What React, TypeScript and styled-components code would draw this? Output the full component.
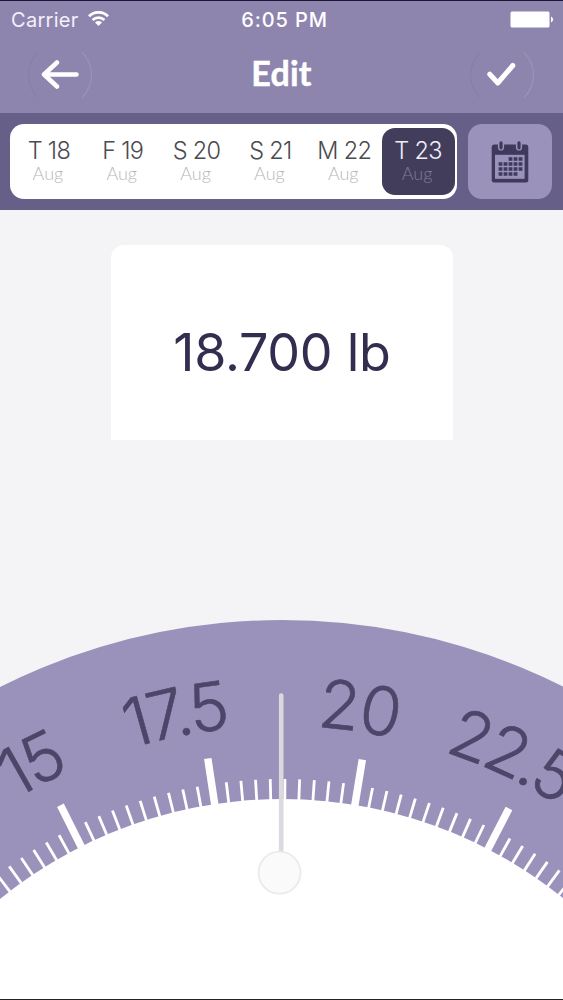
import React from 'react';
import styled, { createGlobalStyle } from 'styled-components';

const GlobalStyle = createGlobalStyle`
  * { box-sizing: border-box; }
  body { margin: 0; background: #f4f4f6; }
`;

const Screen = styled.div`
  width: 563px;
  height: 1000px;
  display: flex;
  flex-direction: column;
  overflow: hidden;
  background: #f4f4f6;
  border-top: 1px solid #1d1538;
  border-bottom: 1px solid #222;
  font-family: Inter, 'Liberation Sans', sans-serif;
`;

const Header = styled.header`
  flex: none;
  height: 112px;
  background: #8e85ae;
  color: #fff;
`;

const StatusBar = styled.div`
  height: 37px;
  padding: 0 9px 0 11px;
  display: grid;
  grid-template-columns: 1fr auto 1fr;
  align-items: center;
  font-size: 20px;
`;

const Carrier = styled.div`
  display: flex;
  align-items: center;
  gap: 9px;
  color: #f3f0fa;
  letter-spacing: 0.3px;
`;

const Clock = styled.div`
  font-weight: 500;
  letter-spacing: 0.9px;
  padding-left: 4px;
`;

const BatteryIcon = styled.svg`
  justify-self: end;
`;

const NavBar = styled.div`
  height: 73px;
  padding: 0 29px 0 28px;
  display: flex;
  align-items: center;
  justify-content: space-between;
`;

const Title = styled.h1`
  margin: 0;
  font-family: Lato, sans-serif;
  font-size: 34px;
  font-weight: 700;
  line-height: 40px;
  letter-spacing: 0.2px;
  padding: 0 0 4px 1px;
  -webkit-text-stroke: 0.5px #fff;
`;

const RoundButton = styled.button`
  width: 64px;
  height: 64px;
  padding: 0;
  border: 1px solid #877ea7;
  border-right-color: #9d95bb;
  border-top-color: transparent;
  border-bottom-color: transparent;
  border-radius: 50%;
  background: none;
  display: flex;
  align-items: center;
  justify-content: center;
`;

const DateBar = styled.div`
  flex: none;
  height: 97px;
  padding: 11px 11px 11px 10px;
  display: flex;
  gap: 11px;
  background: #665f88;
`;

const DayStrip = styled.div`
  width: 447px;
  height: 75px;
  padding: 4px 1.5px 4px 2.5px;
  display: flex;
  border-radius: 14px;
  background: #fff;
`;

const Day = styled.div<{ $active?: boolean }>`
  flex: 1;
  height: 67px;
  padding-top: 9px;
  display: flex;
  flex-direction: column;
  align-items: center;
  border-radius: 13px;
  background: ${(p) => (p.$active ? '#433d5c' : 'transparent')};
  color: ${(p) => (p.$active ? '#f1eff6' : '#4b4a50')};
`;

const DayName = styled.span`
  padding-right: 1px;
  font-size: 23.5px;
  font-weight: 300;
  line-height: 28px;
  letter-spacing: -0.7px;
  white-space: nowrap;
`;

const Month = styled.span<{ $active?: boolean }>`
  margin-top: -3px;
  padding-right: 3px;
  font-family: Lato, sans-serif;
  font-size: 18px;
  font-weight: 300;
  line-height: 22px;
  color: ${(p) => (p.$active ? '#817b98' : '#b7b6bb')};
`;

const CalendarButton = styled.button`
  width: 84px;
  height: 75px;
  padding: 1px 0 0;
  border: 0;
  border-radius: 14px;
  background: #9a92bb;
  display: flex;
  align-items: center;
  justify-content: center;
`;

const Main = styled.main`
  flex: 1;
  display: flex;
  flex-direction: column;
  align-items: center;
  padding-top: 35px;
`;

const ValueCard = styled.section`
  flex: none;
  width: 342px;
  height: 195px;
  margin-left: 1px;
  padding-top: 20px;
  display: flex;
  align-items: center;
  justify-content: center;
  border-radius: 13px 13px 0 0;
  background: #fff;
  color: #332d50;
  font-size: 52px;
  letter-spacing: -0.25px;
`;

const Dial = styled.svg`
  flex: none;
  display: block;
`;

const days = ['T 18', 'F 19', 'S 20', 'S 21', 'M 22', 'T 23'];

const CX = 282;
const CY = 1247;
const OUTER = 627;
const INNER = 448;
const LABEL_R = 521;
const STEP = 1.8;
const ZERO = 0.36;

const ticks = Array.from({ length: 53 }, (_, i) => i - 26);

const labels = [
  { text: '15', angle: -27.5, spacing: -3 },
  { text: '17.5', angle: -11.4, spacing: -3.3 },
  { text: '20', angle: 8.2, spacing: -1.5 },
  { text: '22.5', angle: 25, spacing: -3.8 },
];

function Gauge() {
  return (
    <Dial width="563" height="559" viewBox="0 440 563 559">
      <defs>
        <path id="label-arc" d={`M${CX - LABEL_R} ${CY}A${LABEL_R} ${LABEL_R} 0 0 1 ${CX + LABEL_R} ${CY}`} />
      </defs>
      <circle cx={CX} cy={CY} r={OUTER} fill="#9a92bb" />
      <circle cx={CX} cy={CY} r={INNER} fill="#fff" />
      {ticks.map((n) => {
        const major = (n - 5) % 10 === 0;
        return (
          <line
            key={n}
            x1={CX}
            x2={CX}
            y1={CY - INNER + 1}
            y2={CY - INNER - (major ? 46 : 20)}
            stroke="#fff"
            strokeWidth={major ? 7.5 : 2.8}
            transform={`rotate(${n * STEP + ZERO} ${CX - 0.5} ${CY})`}
          />
        );
      })}
      {labels.map((l) => (
        <g key={l.text} transform={`rotate(${l.angle} ${CX} ${CY})`}>
          <text
            fontFamily="Inter, sans-serif"
            fontSize="67"
            fontWeight="300"
            fill="#4c4669"
            stroke="#4c4669"
            strokeWidth="0.6"
            strokeLinejoin="round"
            textAnchor="middle"
            letterSpacing={l.spacing}
          >
            <textPath href="#label-arc" startOffset="50%">{l.text}</textPath>
          </text>
        </g>
      ))}
      <line x1="281.2" x2="281.2" y1="695.5" y2="856" stroke="#dad9de" strokeWidth="4.6" strokeLinecap="round" />
      <circle cx="279.5" cy="872.7" r="21" fill="#fafafb" stroke="#ebe9ec" strokeWidth="1.8" />
    </Dial>
  );
}

export default function App() {
  return (
    <Screen>
      <GlobalStyle />
      <Header>
        <StatusBar>
          <Carrier>
            Carrier
            <svg width="21" height="17" viewBox="0 0 21 17" fill="none" stroke="#fff" strokeWidth="2.7">
              <path d="M1 5.2a13.6 13.6 0 0 1 19 0M4.6 9a8.4 8.4 0 0 1 11.8 0" />
              <path d="M10.5 15 7 11.5a5 5 0 0 1 7 0Z" fill="#fff" stroke="none" />
            </svg>
          </Carrier>
          <Clock>6:05 PM</Clock>
          <BatteryIcon width="44" height="17" viewBox="0 0 44 17">
            <rect x="0.5" y="0.5" width="39" height="16" rx="1.5" fill="#fff" />
            <path d="M41 5.5a3.2 3.2 0 0 1 0 6Z" fill="#fff" />
          </BatteryIcon>
        </StatusBar>
        <NavBar>
          <RoundButton aria-label="Back">
            <svg width="38" height="30" viewBox="0 0 38 30" fill="none" stroke="#fff" strokeWidth="4.5" strokeLinecap="round" strokeLinejoin="round">
              <path d="M35.5 14.5H3M16 2.5 3 14.5l13 12" />
            </svg>
          </RoundButton>
          <Title>Edit</Title>
          <RoundButton aria-label="Save">
            <svg width="30" height="26" viewBox="0 0 30 26" fill="none" stroke="#fff" strokeWidth="5" strokeLinecap="round" strokeLinejoin="round">
              <path d="M2.8 12.2 10.8 21 25.8 3.5" />
            </svg>
          </RoundButton>
        </NavBar>
      </Header>
      <DateBar>
        <DayStrip>
          {days.map((d, i) => (
            <Day key={d} $active={i === 5}>
              <DayName>{d}</DayName>
              <Month $active={i === 5}>Aug</Month>
            </Day>
          ))}
        </DayStrip>
        <CalendarButton aria-label="Calendar">
          <svg width="38" height="42" viewBox="0 0 38 42">
            <rect x="0.7" y="3.5" width="36.6" height="38" rx="2.5" fill="#3f395c" />
            <rect x="4" y="13.8" width="29.6" height="24" fill="#9a92bb" />
            <path d="M10 0v6.5M28 0v6.5" stroke="#9a92bb" strokeWidth="6.2" strokeLinecap="round" />
            <path d="M10 1.8v5M28 1.8v5" stroke="#3f395c" strokeWidth="3.2" strokeLinecap="round" />
            <g stroke="#3f395c" strokeWidth="3.6" strokeDasharray="3.8 1.2">
              <path d="M17.6 18h13.8M7.6 23h23.8M7.6 28h23.8M7.6 33h18.8" />
            </g>
          </svg>
        </CalendarButton>
      </DateBar>
      <Main>
        <ValueCard>18.700 lb</ValueCard>
        <Gauge />
      </Main>
    </Screen>
  );
}
